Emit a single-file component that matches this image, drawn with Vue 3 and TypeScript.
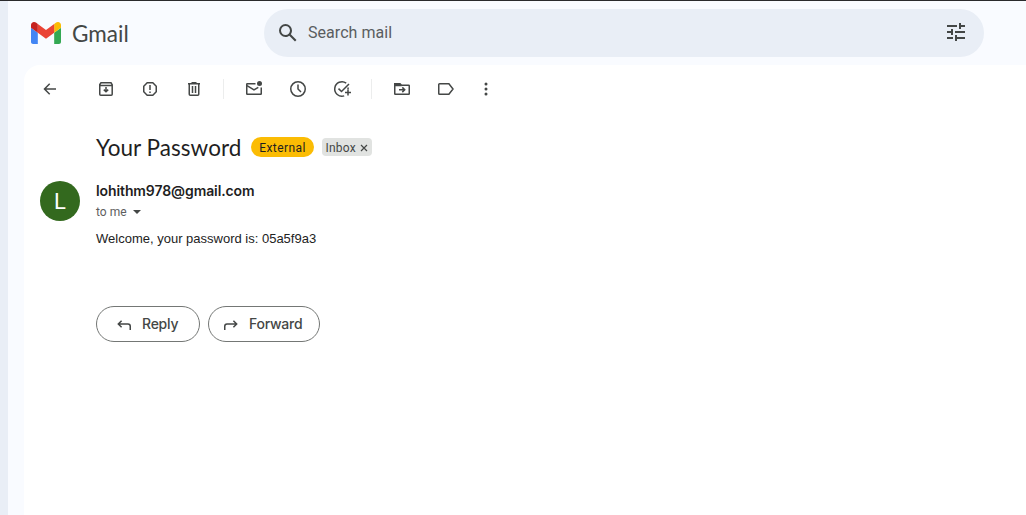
<script setup lang="ts">
interface Tool {
  name: string
  paths: string[]
  fills?: string[]
}

const groups: Tool[][] = [
  [
    {
      name: 'Archive',
      paths: ['M3.75 5.6V15.2q0 1 1 1H15.2q1 0 1-1V5.6L15 3.75H5zM4 6.6h12', 'M10 8v4.6M7.8 10.6L10 12.8l2.2-2.2'],
    },
    { name: 'Report spam', paths: ['M7.2 3.75h5.6l3.45 3.45v5.6l-3.45 3.45H7.2L3.75 12.8V7.2z', 'M10 6v5M10 12.5v1.5'] },
    { name: 'Delete', paths: ['M5.25 5v10.2q0 1 1 1h7.5q1 0 1-1V5', 'M4 4.75h12M7.5 3.75h5', 'M8.5 7v7M11.5 7v7'] },
  ],
  [
    {
      name: 'Mark as unread',
      paths: ['M11.5 4.75H3.2q-.45 0-.45.5v9.5q0 .5.5.5h13.5q.5 0 .5-.5V8.5', 'M3 6.7l7 4.2 4.3-2.5'],
      fills: ['M13 4.5a2.5 2.5 0 1 0 5 0a2.5 2.5 0 1 0-5 0'],
    },
    { name: 'Snooze', paths: ['M17.25 10a7.25 7.25 0 1 1-14.5 0a7.25 7.25 0 1 1 14.5 0', 'M10 5.5V10l3 3'] },
    { name: 'Add to tasks', paths: ['M14.2 4.1A7.25 7.25 0 1 0 12.2 16.9', 'M6.5 9.6L9.5 12.5L17 5', 'M16.1 10.2q0-1-.2-1.7M16 10.5v6M13 13.5h6'] },
  ],
  [
    {
      name: 'Move to',
      paths: ['M2.75 4.75H8L9.6 6.25h7.1q.55 0 .55.55v7.9q0 .55-.55.55H3.3q-.55 0-.55-.55z', 'M7 10.75h5.4M10.3 8.4l2.4 2.35-2.4 2.35'],
      fills: ['M3 4.8h4.8l2 2.4H3z'],
    },
    { name: 'Labels', paths: ['M3.6 4.75h9.3L17 10l-4.1 5.25H3.6q-.85 0-.85-.85V5.6q0-.85.85-.85z'] },
    { name: 'More', paths: [], fills: ['M8.5 5a1.5 1.5 0 1 0 3 0a1.5 1.5 0 1 0-3 0M8.5 10a1.5 1.5 0 1 0 3 0a1.5 1.5 0 1 0-3 0M8.5 15a1.5 1.5 0 1 0 3 0a1.5 1.5 0 1 0-3 0'] },
  ],
]

const actions = [
  { label: 'Reply', kind: 'reply', path: 'M7.6 5.7L4.3 9L7.6 12.3M4.5 9H14Q16.25 9 16.25 11.3V15' },
  { label: 'Forward', kind: 'forward', path: 'M12.4 5.7L15.7 9L12.4 12.3M15.5 9H6Q3.75 9 3.75 11.3V15' },
]
</script>

<template>
  <div class="app">
    <div class="rail"></div>
    <div class="main">
      <header class="top">
        <div class="brand">
          <svg class="logo" width="30" height="22" viewBox="52 42 88 66" preserveAspectRatio="none">
            <path fill="#4285f4" d="M58 108h14V74L52 59v43c0 3.32 2.69 6 6 6" />
            <path fill="#34a853" d="M120 108h14c3.32 0 6-2.69 6-6V59l-20 15" />
            <path fill="#fbbc04" d="M120 48v26l20-15v-8c0-7.42-8.47-11.65-14.4-7.2" />
            <path fill="#ea4335" d="M72 74V48l24 18 24-18v26L96 92" />
            <path fill="#c5221f" d="M52 51v8l20 15V48l-5.6-4.2c-5.94-4.45-14.4-.22-14.4 7.2" />
          </svg>
          <span class="brand-name">Gmail</span>
        </div>
        <div class="search">
          <svg class="lens" width="24" height="24" viewBox="0 0 24 24" fill="#444746"><path d="M20.49 19l-5.73-5.73C15.53 12.2 16 10.91 16 9.5A6.5 6.5 0 1 0 9.5 16c1.41 0 2.7-.47 3.77-1.24L19 20.49 20.49 19zM5 9.5C5 7.01 7.01 5 9.5 5S14 7.01 14 9.5 11.99 14 9.5 14 5 11.99 5 9.5z" /></svg>
          <span class="search-text">Search mail</span>
          <svg width="24" height="24" viewBox="0 0 24 24" fill="#444746"><path d="M3 17v2h6v-2H3zM3 5v2h10V5H3zm10 16v-2h8v-2h-8v-2h-2v6h2zM7 9v2H3v2h4v2h2V9H7zm14 4v-2H11v2h10zm-6-4h2V7h4V5h-4V3h-2v6z" /></svg>
        </div>
      </header>

      <main class="panel">
        <nav class="toolbar">
          <svg class="icon back" viewBox="0 0 20 20"><path d="M16 10H5M9.7 4.8L4.5 10l5.2 5.2" /></svg>
          <div v-for="(group, i) in groups" :key="i" class="group">
            <svg v-for="tool in group" :key="tool.name" class="icon" viewBox="0 0 20 20" :aria-label="tool.name">
              <path v-for="d in tool.paths" :key="d" :d="d" />
              <path v-for="d in tool.fills" :key="d" class="solid" :d="d" />
            </svg>
          </div>
        </nav>

        <div class="subject-row">
          <h1 class="subject">Your Password</h1>
          <span class="external">External</span>
          <span class="inbox">
            <span>Inbox</span>
            <svg width="8" height="8" viewBox="0 0 8 8"><path d="M1 1l6 6M7 1L1 7" /></svg>
          </span>
        </div>

        <div class="message">
          <div class="avatar">L</div>
          <div class="content">
            <div class="sender">lohithm978@gmail.com</div>
            <div class="to"><span>to me</span><i class="caret"></i></div>
            <div class="body">Welcome, your password is: 05a5f9a3</div>
            <div class="actions">
              <button v-for="a in actions" :key="a.kind" :class="['action', a.kind]">
                <svg class="icon" viewBox="0 0 20 20"><path :d="a.path" /></svg>
                <span class="action-label">{{ a.label }}</span>
              </button>
            </div>
          </div>
        </div>
      </main>
    </div>
  </div>
</template>

<style>
body {
  margin: 0;
  overflow: hidden;
}
</style>

<style scoped>
.app {
  box-sizing: border-box;
  display: flex;
  width: 1026px;
  height: 515px;
  border-top: 1px solid #2a2a2c;
  background: #f9fbff;
  font-family: Roboto, "Liberation Sans", sans-serif;
  color: #1f1f1f;
  white-space: nowrap;
}
.rail {
  width: 8px;
  background: #e9eef6;
}
.main {
  flex: 1;
  display: flex;
  flex-direction: column;
}
.top {
  display: flex;
  height: 64px;
  flex: none;
}
.brand {
  display: flex;
  width: 233px;
  padding-left: 23px;
  height: 64px;
  align-items: center;
}
.logo {
  margin-right: 11px;
}
.brand-name {
  padding-top: 2px;
  font-family: Lato, sans-serif;
  font-size: 22.5px;
  line-height: 26px;
  color: #444746;
  letter-spacing: 0.05px;
}
.search {
  box-sizing: border-box;
  display: flex;
  align-items: center;
  width: 720px;
  height: 48px;
  margin-top: 8px;
  padding: 0 16px 2px 12px;
  border-radius: 24px;
  background: #e9eef6;
}
.lens {
  margin-top: 2px;
}
.search-text {
  flex: 1;
  margin-left: 8px;
  font-size: 16px;
  color: #5a5d60;
  letter-spacing: 0.05px;
}
.panel {
  flex: 1;
  margin-left: 16px;
  border-top-left-radius: 16px;
  background: #fff;
}
.toolbar {
  display: flex;
  align-items: center;
  height: 48px;
  padding-left: 16px;
}
.icon {
  width: 20px;
  height: 20px;
  flex: none;
  fill: none;
  stroke: #444746;
  stroke-width: 1.5;
}
.icon .solid {
  fill: #444746;
  stroke: none;
}
.back {
  margin-right: 36px;
}
.group {
  display: flex;
  align-items: center;
  gap: 24px;
  height: 20px;
}
.group + .group {
  margin-left: 19px;
  padding-left: 20px;
  border-left: 1px solid #eceded;
}
.group:last-child .icon:last-child {
  margin-left: -4px;
}
.subject-row {
  display: flex;
  align-items: center;
  height: 28px;
  margin-top: 20px;
  padding-left: 72px;
}
.subject {
  width: 155px;
  margin: 0;
  padding-top: 2px;
  font-family: Lato, sans-serif;
  font-size: 22.5px;
  font-weight: 400;
  line-height: 28px;
  letter-spacing: 0.05px;
}
.external {
  width: 63px;
  height: 20px;
  border-radius: 10px;
  background: #fbbc04;
  font-size: 12px;
  line-height: 22px;
  text-align: center;
  letter-spacing: 0.4px;
}
.inbox {
  box-sizing: border-box;
  display: flex;
  align-items: center;
  justify-content: space-between;
  width: 50px;
  height: 18px;
  margin-left: 8px;
  padding: 1px 4px 0 3.5px;
  border-radius: 4px;
  background: #e1e3e1;
  color: #444746;
  font-size: 12px;
  letter-spacing: 0.2px;
}
.inbox svg {
  fill: none;
  stroke: #444746;
  stroke-width: 1.2;
}
.message {
  display: flex;
  padding: 20px 0 0 16px;
}
.avatar {
  width: 40px;
  height: 40px;
  margin-right: 16px;
  border-radius: 50%;
  background: #33691e;
  color: #fff;
  font-size: 22px;
  line-height: 41px;
  text-align: center;
}
.sender {
  height: 20px;
  font-family: Inter, sans-serif;
  font-size: 14px;
  font-weight: 600;
  line-height: 20px;
  letter-spacing: -0.1px;
}
.to {
  display: flex;
  align-items: center;
  height: 22px;
  color: #5e5e5e;
  font-size: 12px;
}
.caret {
  margin-left: 6px;
  border: 4px solid transparent;
  border-top-color: #444746;
  border-bottom: 0;
}
.body {
  height: 20px;
  margin-top: 6px;
  font-family: "Liberation Sans", Arial, sans-serif;
  font-size: 13px;
  line-height: 20px;
  color: #222;
}
.actions {
  display: flex;
  gap: 8px;
  margin-top: 57px;
}
.action {
  box-sizing: border-box;
  display: flex;
  align-items: center;
  height: 36px;
  padding: 0;
  border: 1px solid #747775;
  border-radius: 18px;
  background: #fff;
  color: #444746;
  font-family: Inter, sans-serif;
  font-size: 14px;
  font-weight: 500;
  letter-spacing: -0.25px;
}
.action .icon {
  margin: 1px 8px 0 0;
}
.action-label {
  padding-bottom: 2px;
}
.reply {
  width: 104px;
  padding-left: 17px;
}
.forward {
  width: 112px;
  padding-left: 12px;
}
</style>
